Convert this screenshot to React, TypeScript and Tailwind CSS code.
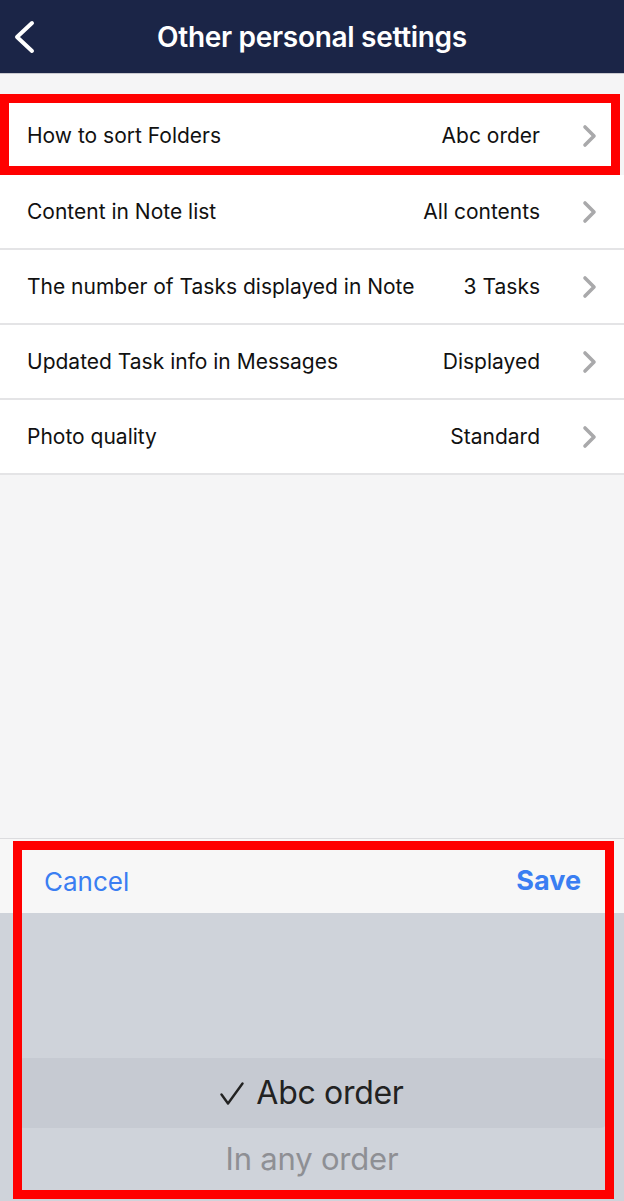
import React from 'react';

const rows = [
  { label: 'Content in Note list', value: 'All contents' },
  { label: 'The number of Tasks displayed in Note', value: '3 Tasks' },
  { label: 'Updated Task info in Messages', value: 'Displayed' },
  { label: 'Photo quality', value: 'Standard' },
];

function Chevron() {
  return (
    <svg width="15" height="24" viewBox="0 0 15 24" className="shrink-0">
      <path d="M3 3l9 9-9 9" fill="none" stroke="#a9a9ab" strokeWidth="3.6" strokeLinecap="round" strokeLinejoin="round" />
    </svg>
  );
}

function Row({ label, value, className }: { label: string; value: string; className: string }) {
  return (
    <div className={`flex items-center bg-white ${className}`}>
      <span className="flex-1 text-[21px] text-[#111]">{label}</span>
      <span className="text-[21px] text-[#111] mr-[42px]">{value}</span>
      <Chevron />
    </div>
  );
}

export default function App() {
  return (
    <div
      className="w-[624px] h-[1201px] flex flex-col bg-[#f5f5f6] overflow-hidden"
      style={{ fontFamily: 'Inter, "Noto Sans", sans-serif' }}
    >
      {/* Header */}
      <div className="h-[74px] shrink-0 bg-[#1b2547] flex items-center relative border-b border-[#c9c9cf]">
        <svg width="24" height="36" viewBox="0 0 24 36" className="ml-[12px]">
          <path d="M20 4L5 18l15 14" fill="none" stroke="#fff" strokeWidth="4" strokeLinecap="round" strokeLinejoin="round" />
        </svg>
        <h1 className="absolute inset-x-0 text-center text-white text-[28px] font-semibold tracking-[-0.3px]">
          Other personal settings
        </h1>
      </div>

      <div className="h-[20px] shrink-0" />

      {/* Settings rows */}
      <div className="w-[620px] border-[9px] border-[#ff0000] bg-white">
        <Row label="How to sort Folders" value="Abc order" className="h-[63px] pl-[18px] pr-[14px] pt-[3px]" />
      </div>
      {rows.map((r) => (
        <Row
          key={r.label}
          label={r.label}
          value={r.value}
          className="h-[75px] pl-[27px] pr-[27px] border-b-2 border-[#e4e4e6]"
        />
      ))}

      <div className="flex-1" />

      {/* Bottom picker sheet */}
      <div className="relative h-[363px] shrink-0 border-t border-[#dcdcdf] flex flex-col">
        <div className="h-[74px] bg-[#f7f7f7] flex items-center justify-between pl-[44px] pr-[43px] pt-[10px]">
          <span className="text-[26px] text-[#3a7ef2]">Cancel</span>
          <span className="text-[27px] font-bold text-[#3a7ef2]">Save</span>
        </div>
        <div className="flex-1 bg-[#cfd3da] flex flex-col">
          <div className="h-[145px]" />
          <div className="h-[70px] mx-[16px] rounded-lg bg-[#c6cad2] flex items-center justify-center gap-[12px]">
            <svg width="24" height="24" viewBox="0 0 24 24" className="mt-[2px]">
              <path d="M1.5 12.5L8 21.5 22.5 1.5" fill="none" stroke="#222" strokeWidth="2.4" strokeLinecap="round" strokeLinejoin="round" />
            </svg>
            <span className="text-[32px] text-[#222] tracking-[-0.3px]">Abc order</span>
          </div>
          <div className="h-[62px] flex items-center justify-center">
            <span className="text-[31px] text-[#8e8f94] tracking-[-0.2px]">In any order</span>
          </div>
        </div>
        {/* annotation frame */}
        <div className="absolute left-[13px] top-[2px] w-[601px] h-[358px] border-[9px] border-[#ff0000]" />
      </div>
    </div>
  );
}
